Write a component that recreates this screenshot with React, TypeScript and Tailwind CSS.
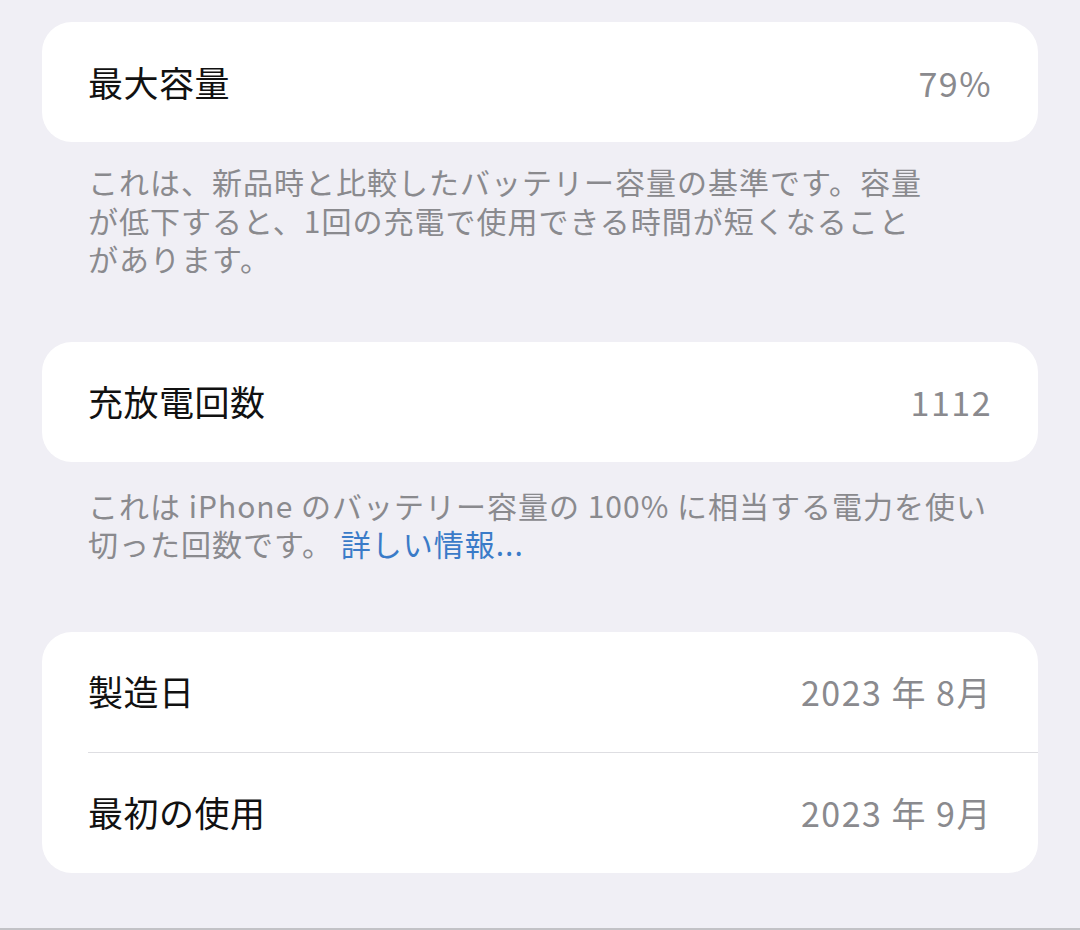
import React from 'react';

const FONT = { fontFamily: '"Noto Sans CJK JP", "Noto Sans", sans-serif' };

function Row({ label, value }: { label: string; value: string }) {
  return (
    <div className="flex h-[120px] items-center justify-between px-[46px]">
      <span className="text-[35px] tracking-[0.5px] text-[#111111]">{label}</span>
      <span className="text-[34px] tracking-[1.5px] text-[#8a8a8e]">{value}</span>
    </div>
  );
}

export default function App() {
  return (
    <div
      className="h-[930px] w-[1080px] overflow-hidden border-b-2 border-[#c2c2c6] bg-[#f0eff5] px-[42px] pt-[22px]"
      style={FONT}
    >
      <div className="rounded-[30px] bg-white">
        <Row label="最大容量" value="79%" />
      </div>
      <p className="mt-[20px] whitespace-nowrap px-[46px] text-[30px] leading-[38.5px] tracking-[1px] text-[#8a8a8e]">
        これは、新品時と比較したバッテリー容量の基準です。容量
        <br />
        が低下すると、1回の充電で使用できる時間が短くなること
        <br />
        があります。
      </p>

      <div className="mt-[64px] rounded-[30px] bg-white">
        <Row label="充放電回数" value="1112" />
      </div>
      <p className="mt-[24px] whitespace-nowrap px-[46px] text-[30px] leading-[38.5px] tracking-[1px] text-[#8a8a8e]">
        これは iPhone のバッテリー容量の 100% に相当する電力を使い
        <br />
        切った回数です。 <span className="text-[#3a7bc8]">詳しい情報...</span>
      </p>

      <div className="mt-[69px] rounded-[30px] bg-white">
        <Row label="製造日" value="2023 年 8月" />
        <div className="ml-[46px] h-px bg-[#dedee2]" />
        <Row label="最初の使用" value="2023 年 9月" />
      </div>
    </div>
  );
}
